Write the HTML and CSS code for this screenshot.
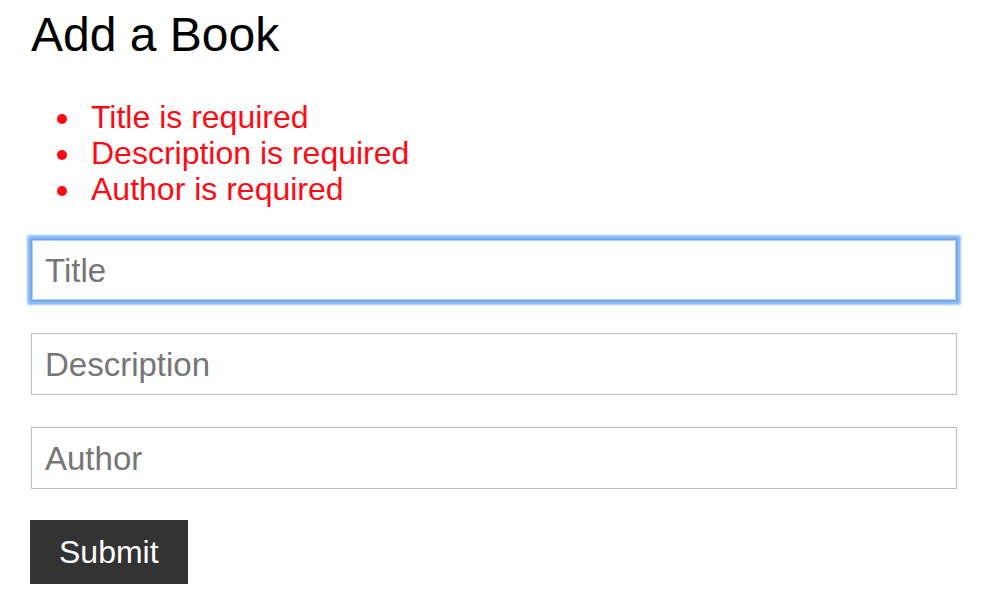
FILE: index.html
```html
<!DOCTYPE html>
<html lang="en">
<head>
<meta charset="utf-8">
<title>Add a Book</title>
<link rel="stylesheet" href="styles.css">
</head>
<body>
  <main class="page">
    <h1 class="page-title">Add a Book</h1>
    <ul class="errors">
      <li class="error">Title is required</li>
      <li class="error">Description is required</li>
      <li class="error">Author is required</li>
    </ul>
    <form class="book-form">
      <input class="field is-focused" type="text" placeholder="Title">
      <input class="field" type="text" placeholder="Description">
      <input class="field" type="text" placeholder="Author">
      <button class="submit" type="button">Submit</button>
    </form>
  </main>
</body>
</html>
```
FILE: styles.css
```css
* { box-sizing: border-box; }

html, body {
  margin: 0;
  padding: 0;
  background: #ffffff;
}

body {
  font-family: "Liberation Sans", Arial, Helvetica, sans-serif;
  color: #000;
}

.page {
  padding: 7px 31px 0 31px;
}

.page-title {
  margin: 0;
  font-size: 48px;
  line-height: 56px;
  font-weight: normal;
}

.errors {
  list-style: none;
  margin: 36px 0 32px 0;
  padding: 0 0 0 60px;
  color: #ff0a14;
  font-size: 32px;
  line-height: 36px;
}

.error::before {
  content: "";
  display: inline-block;
  width: 10px;
  height: 10px;
  border-radius: 50%;
  background: #ff0a14;
  margin: 0 24px 4px -34px;
}

.book-form {
  display: flex;
  flex-direction: column;
  align-items: flex-start;
  gap: 32px;
}

.field {
  display: block;
  width: 926px;
  height: 62px;
  margin: 0;
  padding: 2px 13px 0 13px;
  border: 1px solid #bdbdbd;
  border-radius: 0;
  background: #fff;
  font-family: "Liberation Sans", Arial, Helvetica, sans-serif;
  font-size: 33px;
  color: #333;
  outline: none;
}

.field::placeholder {
  color: #767676;
  opacity: 1;
}

.field.is-focused {
  border: 1px solid #6ea6ee;
  border-radius: 1px;
  box-shadow:
    inset 0 0 0 1px #acd0f9,
    0 0 0 1px #78aff3,
    0 0 0 3px #8fbef6,
    0 0 0 4px #b6d5f9,
    0 0 0 5px #deecfc;
}

.submit {
  margin: -1px 0 0 -1px;
  padding: 14px 29px 14px 29px;
  border: 0;
  border-radius: 0;
  background: #333333;
  color: #ffffff;
  font-family: "Liberation Sans", Arial, Helvetica, sans-serif;
  font-size: 32px;
  line-height: 36px;
  cursor: pointer;
}
```
